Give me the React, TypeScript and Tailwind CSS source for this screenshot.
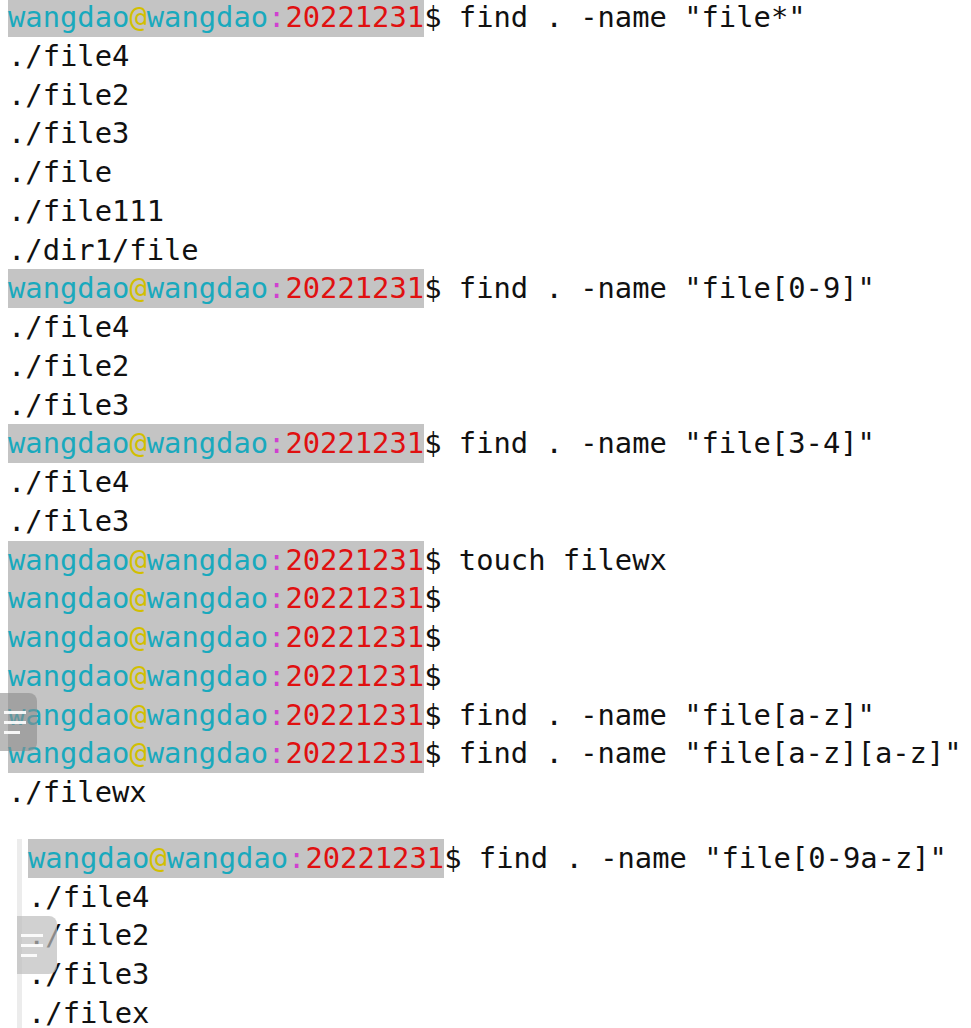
import React from 'react';

type Line = { prompt?: boolean; text: string };

const first: Line[] = [
  { prompt: true, text: ' find . -name "file*"' },
  { text: './file4' },
  { text: './file2' },
  { text: './file3' },
  { text: './file' },
  { text: './file111' },
  { text: './dir1/file' },
  { prompt: true, text: ' find . -name "file[0-9]"' },
  { text: './file4' },
  { text: './file2' },
  { text: './file3' },
  { prompt: true, text: ' find . -name "file[3-4]"' },
  { text: './file4' },
  { text: './file3' },
  { prompt: true, text: ' touch filewx' },
  { prompt: true, text: '' },
  { prompt: true, text: '' },
  { prompt: true, text: '' },
  { prompt: true, text: ' find . -name "file[a-z]"' },
  { prompt: true, text: ' find . -name "file[a-z][a-z]"' },
  { text: './filewx' },
];

const second: Line[] = [
  { prompt: true, text: ' find . -name "file[0-9a-z]"' },
  { text: './file4' },
  { text: './file2' },
  { text: './file3' },
  { text: './filex' },
];

const Prompt = () => (
  <span className="bg-[#c4c4c4]">
    <span className="text-[#19a9bd]">wangdao</span>
    <span className="text-[#d2bf00]">@</span>
    <span className="text-[#19a9bd]">wangdao</span>
    <span className="text-[#d040d0]">:</span>
    <span className="text-[#e01010]">20221231</span>
  </span>
);

const Row = ({ line }: { line: Line }) => (
  <div className="h-[38.75px] whitespace-pre flex items-stretch">
    {line.prompt ? (
      <>
        <span className="flex items-center bg-[#c4c4c4]">
          <Prompt />
        </span>
        <span className="flex items-center">{'$' + line.text}</span>
      </>
    ) : (
      <span className="flex items-center">{line.text}</span>
    )}
  </div>
);

const Handle = ({ className }: { className: string }) => (
  <div className={`absolute rounded-r-lg flex flex-col justify-center gap-[7px] ${className}`}>
    <div className="h-[3px] w-[22px] bg-white/90" />
    <div className="h-[3px] w-[22px] bg-white/90" />
    <div className="h-[3px] w-[16px] bg-white/90" />
  </div>
);

export default function App() {
  return (
    <div
      className="relative w-[971px] h-[1028px] overflow-hidden bg-white text-[#111] text-[28.8px] leading-[38.75px]"
      style={{ fontFamily: '"DejaVu Sans Mono", "Liberation Mono", monospace' }}
    >
      <div className="pl-2 mt-[-2px]">
        {first.map((l, i) => (
          <Row key={i} line={l} />
        ))}
      </div>

      <div className="mt-[27px] ml-[17px] border-l-[5px] border-[#ececec] pl-[6px] pb-4">
        {second.map((l, i) => (
          <Row key={i} line={l} />
        ))}
      </div>

      <Handle className="left-0 top-[693px] w-[37px] h-[58px] bg-[#8c8c8c]/60 pl-[4px]" />
      <Handle className="left-[17px] top-[916px] w-[40px] h-[58px] bg-[#bdbdbd]/70 pl-[4px]" />
    </div>
  );
}
